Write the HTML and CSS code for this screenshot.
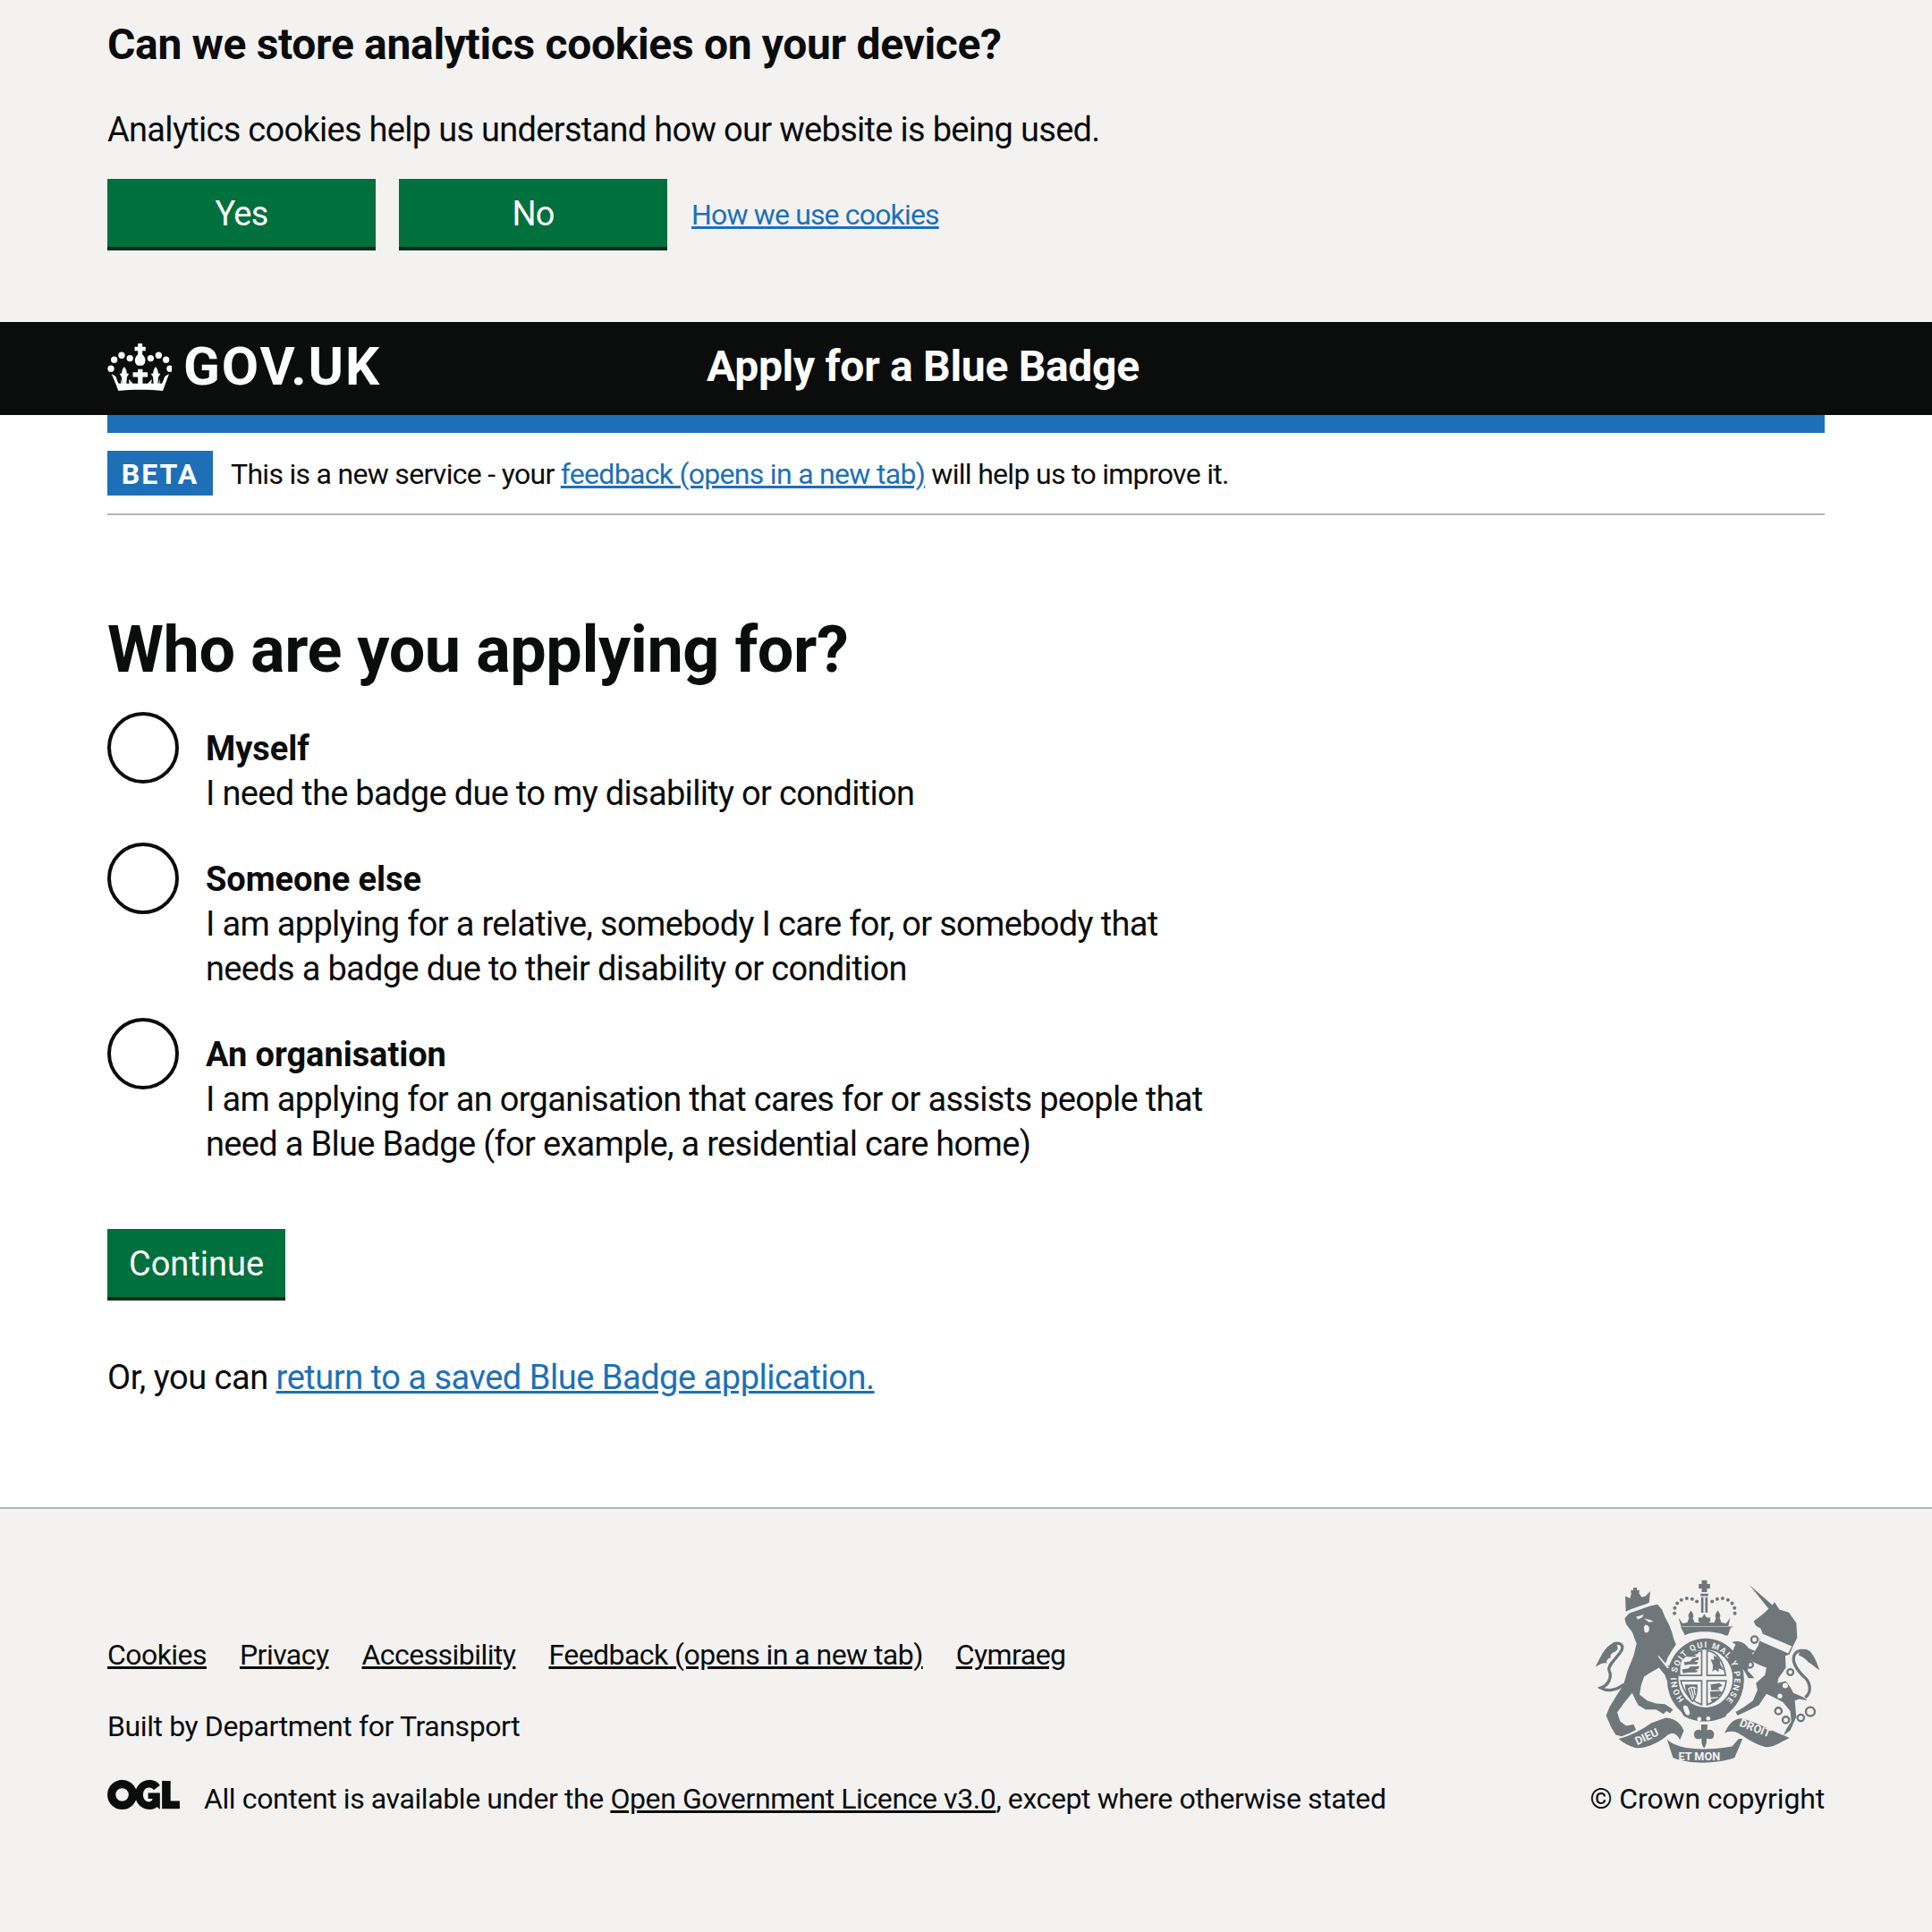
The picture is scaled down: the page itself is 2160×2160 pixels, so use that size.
FILE: index.html
```html
<!DOCTYPE html>
<html lang="en">
<head>
<meta charset="utf-8">
<title>Apply for a Blue Badge</title>
<link rel="stylesheet" href="styles.css">
</head>
<body>
<section class="cookie-banner">
  <h2 class="cookie-title">Can we store analytics cookies on your device?</h2>
  <p class="cookie-text">Analytics cookies help us understand how our website is being used.</p>
  <div class="cookie-actions">
    <button class="btn btn-wide">Yes</button>
    <button class="btn btn-wide">No</button>
    <a class="link cookie-link" href="#">How we use cookies</a>
  </div>
</section>
<header class="site-header">
  <a class="logo" href="#">
    <svg class="crown" viewBox="15 15 215 160" aria-hidden="true">
      <g fill="#fff">
        <path d="M117 15h15v11h11v14h-11v12c9 7 12 18 9 27-2 6-5 9-9 11h-15c-4-2-7-5-9-11-3-9 0-20 9-27v-12h-11v-14h11z"/>
        <circle cx="26" cy="100" r="11"/><circle cx="37" cy="70" r="11"/><circle cx="62" cy="55" r="11"/><circle cx="90" cy="65" r="11"/>
        <circle cx="160" cy="65" r="11"/><circle cx="187" cy="55" r="11"/><circle cx="212" cy="70" r="11"/><circle cx="225" cy="100" r="11"/>
        <path d="M117 102h16v10h17v16h-17v24h-16v-24h-17v-16h17z"/>
        <path d="M72 95c5 7 8 13 7 20l8 3-7 10-2 24H64l-2-24-7-10 8-3c-1-7 2-13 6-20z"/>
        <path d="M178 95c5 7 8 13 7 20l8 3-7 10-2 24h-14l-2-24-7-10 8-3c-1-7 2-13 6-20z"/>
        <path d="M28 118l14 8 6 16 4 8 8 0-2-16 6 16h24l-2-14 14 14h50l14-14-2 14h24l6-16-2 16 8 0 4-8 6-16 14-8-14 38-7 19c-40-5-110-5-150 0l-7-19z"/>
      </g>
    </svg>
    <span class="logo-text">GOV.UK</span>
  </a>
  <a class="service-name" href="#">Apply for a Blue Badge</a>
</header>
<div class="container">
  <div class="blue-bar"></div>
  <div class="phase">
    <strong class="phase-tag">BETA</strong>
    <span class="phase-text">This is a new service - your <a class="link" href="#">feedback (opens in a new tab)</a> will help us to improve it.</span>
  </div>
  <main class="main">
    <h1 class="title">Who are you applying for?</h1>
    <div class="radios">
      <label class="radio">
        <span class="radio-ring"></span>
        <span class="radio-body">
          <b class="radio-label">Myself</b>
          <span class="radio-hint">I need the badge due to my disability or condition</span>
        </span>
      </label>
      <label class="radio">
        <span class="radio-ring"></span>
        <span class="radio-body">
          <b class="radio-label">Someone else</b>
          <span class="radio-hint">I am applying for a relative, somebody I care for, or somebody that<br>needs a badge due to their disability or condition</span>
        </span>
      </label>
      <label class="radio">
        <span class="radio-ring"></span>
        <span class="radio-body">
          <b class="radio-label">An organisation</b>
          <span class="radio-hint">I am applying for an organisation that cares for or assists people that<br>need a Blue Badge (for example, a residential care home)</span>
        </span>
      </label>
    </div>
    <button class="btn btn-continue">Continue</button>
    <p class="return">Or, you can <a class="link" href="#">return to a saved Blue Badge application.</a></p>
  </main>
</div>
<footer class="footer">
  <div class="footer-inner">
    <div class="footer-meta">
      <ul class="footer-links">
        <li><a href="#">Cookies</a></li>
        <li><a href="#">Privacy</a></li>
        <li><a href="#">Accessibility</a></li>
        <li><a href="#">Feedback (opens in a new tab)</a></li>
        <li><a href="#">Cymraeg</a></li>
      </ul>
      <p class="built">Built by Department for Transport</p>
      <div class="licence">
        <svg class="ogl" viewBox="60 90 245 100" aria-hidden="true">
          <circle cx="110" cy="140" r="36" fill="none" stroke="#0b0c0c" stroke-width="28"/>
          <path d="M238 108c-7-11-20-18-34-18-29 0-50 22-50 50s21 50 50 50c10 0 18-3 25-8l9 8v-56h-40v20h15c-1 6-5 10-12 10-12 0-20-10-20-24s8-24 20-24c7 0 12 3 16 8z" fill="#0b0c0c"/>
          <path d="M245 93h29v68h31v27h-60z" fill="#0b0c0c"/>
        </svg>
        <span>All content is available under the <a href="#">Open Government Licence v3.0</a>, except where otherwise stated</span>
      </div>
    </div>
    <div class="crest-block">
      <svg class="crest" viewBox="70 45 770 620" aria-hidden="true">
        <defs>
          <path id="garterArc" d="M370 446A97 103 0 1 1 512 446"/>
        </defs>
        <g class="crest-dark">
          <path d="M185 158L255 133 280 128 295 145 305 170 318 195 328 220 335 245 342 262 330 280 315 305 305 330 325 335 345 375 335 405 325 395 310 380 305 365 285 340 250 360 235 370 225 400 220 430 245 450 275 460 305 462 332 480 322 492 310 485 300 495 275 480 240 480 215 465 195 425 170 455 145 490 155 520 175 535 200 530 208 548 185 560 160 570 140 565 125 540 108 500 120 470 145 430 165 400 180 350 200 300 210 260 195 220 175 195 170 175Z"/>
          <path d="M174 152L192 144 244 126 252 122 256 84 240 100 228 104 216 88 204 78 193 88 188 108 172 100Z"/>
          <path d="M199 72h12v8h8v10h-8v8h-12v-8h-8v-10h8z"/>
          <path class="crest-line" d="M168 396C140 418 110 420 90 408 118 398 128 370 118 350 112 332 138 315 158 285 170 265 155 252 130 262"/>
          <path d="M135 258C112 262 95 290 72 338 85 328 100 322 112 325 105 320 112 310 125 305 118 302 125 290 140 285 150 280 150 265 135 258Z"/>
          <path d="M588 63L665 130 672 120 688 145 720 155 745 190 748 240 732 272 722 296 708 300 710 340 685 375 682 392 710 385 725 405 735 425 770 440 782 450 755 445 740 450 745 505 725 550 702 567 712 545 728 520 725 485 700 455 670 440 645 428 620 465 580 485 548 500 542 488 570 472 600 450 615 415 610 392 640 365 645 340 620 330 590 315 582 350 605 375 585 375 570 350 550 330 530 290 540 265 560 255 600 295 618 265 624 240 632 225 625 208 610 200 602 185 640 155 652 142Z"/>
          <path d="M530 255C545 248 570 252 585 275L610 285 585 295 565 285 550 268Z"/>
          <path class="crest-line" d="M775 440C800 420 790 385 770 370 745 345 730 320 738 298 748 278 770 280 790 290"/>
          <path d="M760 280C785 270 805 290 822 348 808 340 795 325 785 322 778 310 760 300 752 298Z"/>
          <path d="M428 47h18v13h10v15h-10v12h-18v-12h-10v-15h10z"/>
          <path d="M424 92h26v8h-26zM426 104h8v52h-8zM440 104h8v52h-8z"/>
          <path d="M350 172l14 20 16-3 12-32 12 32 16 0 17-22 17 22 16 0 12-32 12 32 16 3 14-20-8 33 16 0v-3H362l-2 3z"/>
          <path d="M358 204H526L516 232H372Z"/>
          <path d="M392 148c6 8 10 14 8 24h-16c-2-10 2-16 8-24zM482 148c6 8 10 14 8 24h-16c-2-10 2-16 8-24zM437 160l8 12h12v14h-40v-14h12z"/>
          <ellipse cx="441" cy="380" rx="129" ry="138"/>
          <path d="M350 470c40 45 120 50 168 12l-10 22c-45 22-100 22-140-2z"/>
        </g>
        <g class="crest-dots">
          <circle cx="337" cy="158" r="6"/><circle cx="338" cy="140" r="6"/><circle cx="346" cy="124" r="6"/><circle cx="360" cy="113" r="6"/><circle cx="378" cy="108" r="6"/><circle cx="396" cy="110" r="6"/><circle cx="412" cy="118" r="6"/>
          <circle cx="463" cy="118" r="6"/><circle cx="480" cy="110" r="6"/><circle cx="498" cy="108" r="6"/><circle cx="516" cy="113" r="6"/><circle cx="530" cy="124" r="6"/><circle cx="538" cy="140" r="6"/><circle cx="539" cy="158" r="6"/>
        </g>
        <path class="crest-light" d="M370 233C395 215 480 215 510 233L505 246C480 235 395 235 375 246Z"/>
        <g class="crest-light">
          <ellipse cx="441" cy="376" rx="91" ry="97"/>
          <path d="M235 175l20 5 12 5-15 3zM208 170l26-8-6 10-14 6zM240 196c10 2 14 8 12 18-2 8-8 10-14 8-4-6-2-12-4-18z"/>
          <path d="M285 300l30 35 4 5-6 2-32-40z"/>
          <path d="M628 225L730 268 718 292 622 250Z"/>
          <circle cx="708" cy="400" r="9"/><circle cx="690" cy="435" r="8"/>
        </g>
        <g class="crest-shield">
          <path d="M358 316C370 300 394 290 428 284V366H354C353 348 354 330 358 316Z"/>
          <path d="M446 282C478 288 500 312 508 366H446Z"/>
          <path d="M358 384H428V464C394 452 368 426 358 384Z"/>
          <path d="M446 384H510C506 424 484 452 446 464Z"/>
        </g>
        <g class="crest-dark">
          <path d="M368 322l22-4 6-8 22-6v9l-16 6 14 2-4 8-24 0-16 3zM362 346l22-4 6-6 30-1-2 8-14 5 12 2-6 6-22 0-22 3zM372 300l22-6 6-6 18-3-2 8-14 4 10 3-8 4-24-1z"/>
          <path d="M468 300c16 2 24 14 22 28l14 22-18-8-2 12-12-8-8 8 2-22-8-20 12 2z"/>
          <path d="M372 396h42c2 24-2 48-16 60-14-10-26-36-26-60z"/>
          <path d="M458 396l30-4 10 8-16 8 8 6-30 2zM456 420l34-2 10 6-14 8 6 6-34 2zM458 444l24-2-12 14-8 0z"/>
        </g>
        <path class="crest-lightline" d="M384 410c8-6 20-6 26 0M384 410l14 38M392 404l10 38M402 404l4 28"/>
        <text class="crest-motto"><textPath href="#garterArc" textLength="470" lengthAdjust="spacing">HONI SOIT QUI MAL Y PENSE</textPath></text>
        <path class="crest-light" d="M366 470c4-6 12-4 16 2l6 18c2 6-4 12-10 8-6-4-12-22-12-28z"/>
        <circle class="crest-light" cx="420" cy="512" r="7"/><circle class="crest-light" cx="450" cy="510" r="7"/>
        <g class="crest-dark">
          <path d="M150 578C185 570 225 550 260 525L308 508C340 510 362 530 368 552L355 582C345 560 330 555 315 565 285 592 235 615 205 608 185 602 165 592 150 578Z"/>
          <path d="M312 580C340 612 430 622 530 604L552 578 565 578 538 642C480 662 390 665 332 642Z"/>
          <path d="M505 560C515 535 530 512 560 510 620 525 670 555 722 575 690 590 665 610 640 605 600 595 575 572 552 560 535 550 515 552 505 560Z"/>
          <path d="M426 530h22l-2 20c16-8 28 6 22 22-6 10-18 8-24 4 2 10 0 24-8 34-8-10-10-24-8-34-6 4-18 6-24-4-6-16 6-30 22-22z"/>
          <g class="crest-rings">
            <circle cx="685" cy="485" r="11"/><circle cx="710" cy="515" r="11"/><circle cx="760" cy="508" r="11"/><circle cx="792" cy="487" r="15"/><circle cx="725" cy="355" r="10"/><circle cx="605" cy="246" r="11"/><circle cx="590" cy="330" r="10"/>
          </g>
        </g>
        <text class="crest-ribbon" transform="translate(212 600) rotate(-25)">DIEU</text>
        <text class="crest-ribbon" x="350" y="650">ET MON</text>
        <text class="crest-ribbon" transform="translate(552 535) rotate(21)">DROIT</text>
      </svg>
      <span class="copyright">© Crown copyright</span>
    </div>
  </div>
</footer>
</body>
</html>
```
FILE: styles.css
```css
* { box-sizing: border-box; }
html, body { margin: 0; padding: 0; }
body {
  font-family: Roboto, "Liberation Sans", sans-serif;
  color: #0b0c0c;
  background: #fff;
  font-size: 38px;
  line-height: 50px;
  min-height: 2160px;
  display: flex;
  flex-direction: column;
}
a { color: inherit; }
.link { color: #1d70b8; }

.cookie-banner { background: #f3f2f1; height: 360px; padding: 20px 120px 0; }
.cookie-title { margin: 0 0 40px; font-size: 48px; line-height: 60px; font-weight: 700; letter-spacing: -0.33px; }
.cookie-text { margin: 0 0 30px; font-size: 38px; line-height: 50px; letter-spacing: -0.7px; }
.cookie-actions { display: flex; align-items: center; gap: 26px; }
.cookie-link { font-size: 32px; line-height: 40px; letter-spacing: -0.84px; margin-left: 1px; }

.btn {
  display: block;
  height: 80px;
  border: 0;
  border-radius: 0;
  background: #00703c;
  color: #fff;
  box-shadow: inset 0 -4px 0 #002d18;
  font: 400 38px/50px Roboto, "Liberation Sans", sans-serif;
  padding: 0 0 2px;
}
.btn-wide { width: 300px; letter-spacing: -0.8px; }
.btn-continue { width: 199px; }

.site-header { background: #0b0c0c; height: 104px; padding: 0 120px 4px; display: flex; align-items: center; color: #fff; }
.logo { display: flex; align-items: center; width: 670px; gap: 13px; color: #fff; text-decoration: none; }
.crown { width: 72px; height: 53px; flex: none; }
.logo-text { font-size: 60px; line-height: 70px; font-weight: 700; letter-spacing: 1.9px; }
.service-name { color: #fff; text-decoration: none; font-size: 48px; line-height: 60px; font-weight: 700; letter-spacing: -0.3px; }

.container { padding: 0 120px; }
.blue-bar { height: 20px; background: #1d70b8; }
.phase { display: flex; align-items: center; height: 92px; border-bottom: 2px solid #b1b4b6; gap: 20px; }
.phase-tag { display: block; width: 118px; height: 50px; background: #1d70b8; color: #fff; font-size: 32px; line-height: 52px; text-align: center; letter-spacing: 2px; }
.phase-text { font-size: 32px; line-height: 40px; letter-spacing: -0.7px; padding-top: 2px; }

.main { padding-top: 111px; }
.title { margin: 0 0 29px; font-size: 72px; line-height: 80px; font-weight: 700; letter-spacing: -0.44px; }
.radios { display: flex; flex-direction: column; gap: 30px; margin-bottom: 70px; }
.radio { display: flex; gap: 30px; }
.radio-ring { flex: none; width: 80px; height: 80px; border: 4px solid #0b0c0c; border-radius: 50%; background: #fff; }
.radio-body { display: flex; flex-direction: column; padding-top: 16px; }
.radio-label { font-weight: 700; line-height: 50px; letter-spacing: -0.05px; }
.radio-hint { line-height: 50px; letter-spacing: -0.68px; }
.return { margin: 61px 0 0; letter-spacing: -0.48px; }

.footer { flex: 1; margin-top: 120px; background: #f3f2f1; border-top: 2px solid #b1b4b6; padding: 79px 120px 0; }
.footer-inner { display: flex; justify-content: space-between; align-items: flex-end; font-size: 32px; line-height: 40px; letter-spacing: -0.4px; }
.footer-links { list-style: none; margin: 0 0 40px; padding: 0; display: flex; gap: 37px; letter-spacing: -0.55px; }
.built { margin: 0 0 40px; }
.licence { display: flex; align-items: center; gap: 27px; }
.ogl { width: 81px; height: 33px; flex: none; margin-bottom: 8px; }
.crest-block { display: flex; flex-direction: column; align-items: flex-end; gap: 18px; }
.crest { width: 257px; height: 207px; }
.crest-dark, .crest-dots { fill: #6f777b; }
.crest-light { fill: #f3f2f1; }
.crest-shield { fill: #f3f2f1; stroke: #6f777b; stroke-width: 5; }
.crest-line { fill: none; stroke: #6f777b; stroke-width: 10; }
.crest-lightline { fill: none; stroke: #f3f2f1; stroke-width: 4; }
.crest-rings { fill: none; stroke: #6f777b; stroke-width: 7; }
.crest-motto { fill: #f3f2f1; font: 700 28px Roboto, sans-serif; letter-spacing: 0; }
.crest-ribbon { fill: #f3f2f1; font: 700 38px Roboto, sans-serif; letter-spacing: 0; }
.copyright { white-space: nowrap; letter-spacing: -0.15px; }
```
